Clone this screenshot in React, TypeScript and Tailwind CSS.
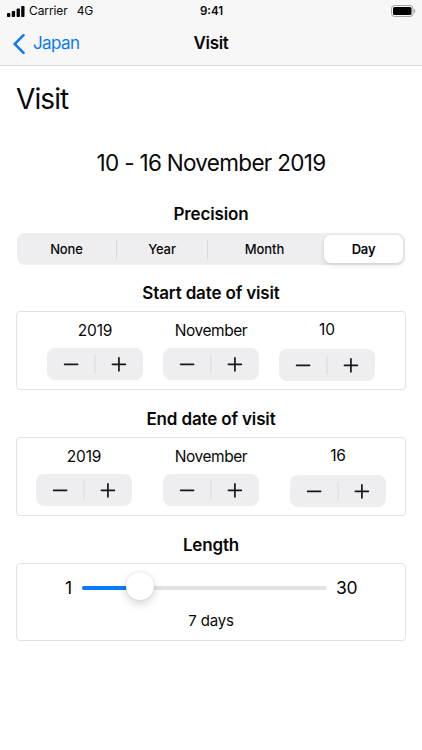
import { clsx } from "clsx"

function StatusBar() {
  return (
    <div className="grid h-[22px] grid-cols-3 items-center pl-[7px] pr-[6px]">
      <div className="flex items-center">
        <svg width="18" height="11" viewBox="0 0 18 11">
          <rect x="0" y="7" width="3.3" height="4" rx="0.8" />
          <rect x="4.8" y="5" width="3.3" height="6" rx="0.8" />
          <rect x="9.6" y="2.6" width="3.3" height="8.4" rx="0.8" />
          <rect x="14.2" y="0" width="3.3" height="11" rx="0.8" />
        </svg>
        <span className="ml-[4px] text-[12px] tracking-[-0.1px]">Carrier</span>
        <span className="ml-[9px] text-[12px] tracking-[-0.2px]">4G</span>
      </div>
      <span className="pt-[2px] text-center text-[11.5px] font-semibold">9:41</span>
      <svg className="justify-self-end" width="25" height="12" viewBox="0 0 25 12">
        <rect x="0.5" y="0.5" width="21.5" height="11" rx="3" fill="#f7f7f7" stroke="#a3a3a3" />
        <rect x="2" y="2" width="18.5" height="8" rx="1.5" />
        <path d="M23.2 4v4c1.4-.5 1.4-3.5 0-4Z" fill="#8e8e8e" />
      </svg>
    </div>
  )
}

function NavBar() {
  return (
    <nav className="grid h-[43px] grid-cols-3 items-center">
      <div className="flex items-center pl-[13px] text-[#0a7aef]">
        <svg width="12" height="20" viewBox="0 0 12 20" fill="none">
          <path d="M10.5 1.2 1.7 10l8.8 8.8" stroke="currentColor" strokeWidth="2.5" strokeLinecap="round" />
        </svg>
        <span className="ml-[8px] text-[17px] tracking-[-0.6px]">Japan</span>
      </div>
      <h1 className="text-center text-[17px] font-semibold tracking-[-0.3px]">Visit</h1>
    </nav>
  )
}

const segments = [
  { label: "None", width: "w-[100px]" },
  { label: "Year", width: "w-[91px]" },
  { label: "Month", width: "w-[114px]" },
]

function PrecisionControl() {
  return (
    <div className="ml-[17px] flex h-[32px] w-[388px] items-center rounded-[8px] bg-[#eeeef0] text-[13px] font-medium tracking-[-0.1px]">
      {segments.map((segment, i) => (
        <div
          key={segment.label}
          className={clsx(
            "flex h-[19px] items-center justify-center border-r pt-px",
            segment.width,
            i < 2 ? "border-[#d8d8dc]" : "border-transparent",
          )}
        >
          {segment.label}
        </div>
      ))}
      <div className="ml-[2px] flex h-[28px] w-[79px] items-center justify-center rounded-[7px] bg-white pt-px font-semibold tracking-[-0.2px] shadow-[0_2px_5px_rgba(0,0,0,0.13)]">
        Day
      </div>
    </div>
  )
}

function Stepper() {
  return (
    <div className="flex h-[32px] w-[96px] items-center rounded-[8px] bg-[#eeeef0]">
      <svg width="96" height="32" viewBox="0 0 96 32" fill="none" stroke="#161616" strokeWidth="1.7" strokeLinecap="round">
        <path d="M17.6 16.3h13M65.4 16.3h13M71.9 9.8v13" />
        <path d="M48 7v18" stroke="#d8d8dc" strokeWidth="1" />
      </svg>
    </div>
  )
}

function DateCard({ values, gap }: { values: string[]; gap: string }) {
  return (
    <div className={clsx("ml-[16px] flex h-[79px] w-[390px] justify-center rounded-[4px] border border-[#e2e2e4]", gap)}>
      {values.map((value, i) => (
        <div key={i} className={clsx("flex flex-col items-center", i === 2 ? "gap-[9px] pt-[8px]" : "gap-[7px] pt-[9px]")}>
          <span
            className={clsx(
              "text-[15.5px] leading-[20px]",
              i === 1 ? "tracking-[-0.45px]" : "tracking-[-0.15px]",
            )}
          >
            {value}
          </span>
          <Stepper />
        </div>
      ))}
    </div>
  )
}

function SectionTitle({ children }: { children: string }) {
  return <h3 className="text-center text-[17px] leading-[22px] font-semibold tracking-[-0.15px]">{children}</h3>
}

function LengthCard() {
  return (
    <div className="ml-[16px] h-[78px] w-[390px] rounded-[4px] border border-[#e2e2e4]">
      <div className="flex h-[48px] items-center pl-[48px] text-[17.5px] tracking-[-0.4px]">
        <span className="w-[17px]">1</span>
        <div className="relative h-[4px] w-[245px] rounded-full bg-[#e3e3e5]">
          <div className="h-[4px] w-[58px] rounded-full bg-[#087bf8]" />
          <div className="absolute top-[-14px] left-[44px] size-[28px] rounded-full bg-white shadow-[0_4px_10px_rgba(0,0,0,0.16),0_0_2px_rgba(0,0,0,0.14)]" />
        </div>
        <span className="ml-[9px]">30</span>
      </div>
      <p className="text-center text-[15px] leading-[18px] tracking-[-0.15px]">7 days</p>
    </div>
  )
}

export default function App() {
  return (
    <div className="h-[750px] w-[422px] overflow-hidden bg-white font-['Inter',sans-serif] text-[#080808]">
      <header className="h-[66px] border-b border-[#dadada] bg-[#f7f7f7]">
        <StatusBar />
        <NavBar />
      </header>
      <main>
        <h2 className="pt-[15px] pl-[16px] text-[28px] leading-[36px] tracking-[-0.9px]">Visit</h2>
        <p className="mt-[32px] text-center text-[22.5px] leading-[28px] tracking-[-0.7px]">10 - 16 November 2019</p>
        <div className="mt-[26px]">
          <SectionTitle>Precision</SectionTitle>
        </div>
        <div className="mt-[8px]">
          <PrecisionControl />
        </div>
        <div className="mt-[17px] mb-[7px]">
          <SectionTitle>Start date of visit</SectionTitle>
        </div>
        <DateCard values={["2019", "November", "10"]} gap="gap-[20px]" />
        <div className="mt-[18px] mb-[7px]">
          <SectionTitle>End date of visit</SectionTitle>
        </div>
        <DateCard values={["2019", "November", "16"]} gap="gap-[31px]" />
        <div className="mt-[18px] mb-[7px]">
          <SectionTitle>Length</SectionTitle>
        </div>
        <LengthCard />
      </main>
    </div>
  )
}
